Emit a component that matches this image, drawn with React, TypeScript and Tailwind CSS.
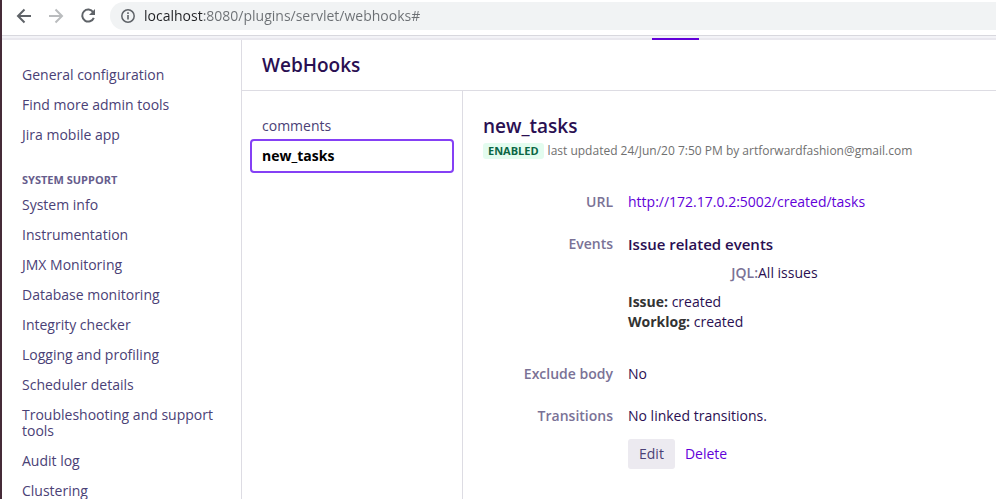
import type { ReactNode } from "react";

const generalLinks = ["General configuration", "Find more admin tools", "Jira mobile app"];

const supportLinks = [
  "System info",
  "Instrumentation",
  "JMX Monitoring",
  "Database monitoring",
  "Integrity checker",
  "Logging and profiling",
  "Scheduler details",
  "Troubleshooting and support tools",
  "Audit log",
  "Clustering",
];

function BrowserBar() {
  return (
    <header className="flex h-[35px] shrink-0 items-start gap-3 bg-white pt-[2px] pl-3">
      <div className="flex h-7 items-center gap-3">
        <button type="button" aria-label="Back" className="flex size-5 items-center justify-center">
          <svg viewBox="0 0 16 16" className="size-4 fill-none stroke-[#5f6368] stroke-2">
            <path d="M15 8H2.500M8.500 1.500L2 8l6.500 6.500" />
          </svg>
        </button>
        <button type="button" aria-label="Forward" className="flex size-5 items-center justify-center">
          <svg viewBox="0 0 16 16" className="size-4 fill-none stroke-[#babcbe] stroke-2">
            <path d="M1 8h12.500M7.500 1.500L14 8l-6.500 6.500" />
          </svg>
        </button>
        <button type="button" aria-label="Reload" className="flex size-5 items-center justify-center">
          <svg viewBox="0 0 16 16" className="size-4">
            <path d="M13.200 4.200A6 6 0 1 0 13.800 9.800" fill="none" stroke="#5f6368" strokeWidth="2" />
            <path d="M15 1v6H9z" fill="#5f6368" />
          </svg>
        </button>
      </div>
      <div className="flex h-7 min-w-0 flex-1 items-center gap-2 rounded-l-full bg-[#f1f3f4] pl-[10px]">
        <svg viewBox="0 0 16 16" className="size-4 shrink-0">
          <circle cx="8" cy="8" r="6.200" fill="none" stroke="#5f6368" strokeWidth="1.500" />
          <path d="M8 7v4.500M8 4.300v1.700" stroke="#5f6368" strokeWidth="1.600" />
        </svg>
        <input
          type="text"
          aria-label="Address"
          defaultValue="localhost:8080/plugins/servlet/webhooks#"
          className="min-w-0 flex-1 bg-[linear-gradient(90deg,#202124_59px,#6b6f73_59px)] bg-clip-text text-[14px] leading-5 text-transparent outline-none"
        />
      </div>
    </header>
  );
}

function SideLink({ children }: { children: ReactNode }) {
  return (
    <li>
      <a href="#" className="block py-[7px] text-[14px] leading-4">
        {children}
      </a>
    </li>
  );
}

function Row({ label, children }: { label: string; children: ReactNode }) {
  return (
    <div className="grid grid-cols-[130px_1fr] gap-x-[15px]">
      <dt className="text-right font-semibold text-[#7a7296]">{label}</dt>
      <dd>{children}</dd>
    </div>
  );
}

export default function App() {
  return (
    <div className="flex h-screen flex-col overflow-hidden border-l-2 border-[#452b38] bg-white font-['Open_Sans','Noto_Sans',sans-serif] text-[14px] leading-5 text-[#2a0f52]">
      <BrowserBar />
      <div className="flex h-[5px] shrink-0 items-end border-t border-[#d8d8de] bg-[#f3f3f7]">
        <div className="flex h-[2px] flex-1 bg-[#e9e8ee] pl-[650px]">
          <div className="h-full w-[47px] bg-[#6200d9]" />
        </div>
      </div>
      <div className="flex min-h-0 flex-1">
        <nav aria-label="Administration" className="w-60 shrink-0 overflow-hidden border-r border-[#dddce3] px-5 pt-5 text-[#4a4176]">
          <ul>
            {generalLinks.map((link) => (
              <SideLink key={link}>{link}</SideLink>
            ))}
          </ul>
          <h2 className="mt-5 text-[11px] leading-5 font-bold text-[#665d8c]">SYSTEM SUPPORT</h2>
          <ul>
            {supportLinks.map((link) => (
              <SideLink key={link}>{link}</SideLink>
            ))}
          </ul>
        </nav>
        <main className="flex min-w-0 flex-1 flex-col">
          <h1 className="border-b border-[#dddce3] px-5 py-[13px] text-[19px] leading-6 font-semibold">WebHooks</h1>
          <div className="flex min-h-0 flex-1">
            <ul className="w-[221px] shrink-0 border-r border-[#dddce3] px-2 pt-5">
              <li>
                <a href="#" className="block px-3 pt-[5px] pb-[3px] text-[#4a4176]">comments</a>
              </li>
              <li>
                <a href="#" aria-current="page" className="block rounded-[4px] border-2 border-[#8540f5] px-[10px] py-[5px] font-bold text-black">
                  new_tasks
                </a>
              </li>
            </ul>
            <section className="min-w-0 flex-1 px-5 pt-[23px]">
              <h2 className="text-[19px] leading-6 font-semibold">new_tasks</h2>
              <p className="mt-[5px] flex h-4 items-center gap-1 text-[12px] leading-4 text-[#707070]">
                <span className="rounded-[3px] bg-[#e3fcef] px-[5px] text-[11px] font-bold text-[#0b6644]">ENABLED</span>
                last updated 24/Jun/20 7:50 PM by artforwardfashion@gmail.com
              </p>
              <dl className="mt-[33px] flex flex-col gap-[22px]">
                <Row label="URL">
                  <a href="#" className="text-[#6200d9]">http://172.17.0.2:5002/created/tasks</a>
                </Row>
                <Row label="Events">
                  <h3 className="text-[15px] leading-5 font-semibold">Issue related events</h3>
                  <p className="grid grid-cols-[130px_1fr] py-[9px]">
                    <span className="text-right font-semibold text-[#7a7296]">JQL:</span>
                    <span>All issues</span>
                  </p>
                  <p>
                    <strong className="text-[#333333]">Issue:</strong> created
                  </p>
                  <p className="mb-[10px]">
                    <strong className="text-[#333333]">Worklog:</strong> created
                  </p>
                </Row>
                <Row label="Exclude body">No</Row>
                <Row label="Transitions">No linked transitions.</Row>
              </dl>
              <div className="mt-[13px] flex gap-[10px] pl-[145px]">
                <button type="button" className="rounded-[3px] bg-[#eceaf0] px-[11px] py-[5px] text-[#4a4176]">Edit</button>
                <button type="button" className="text-[#6200d9]">Delete</button>
              </div>
            </section>
          </div>
        </main>
      </div>
    </div>
  );
}
